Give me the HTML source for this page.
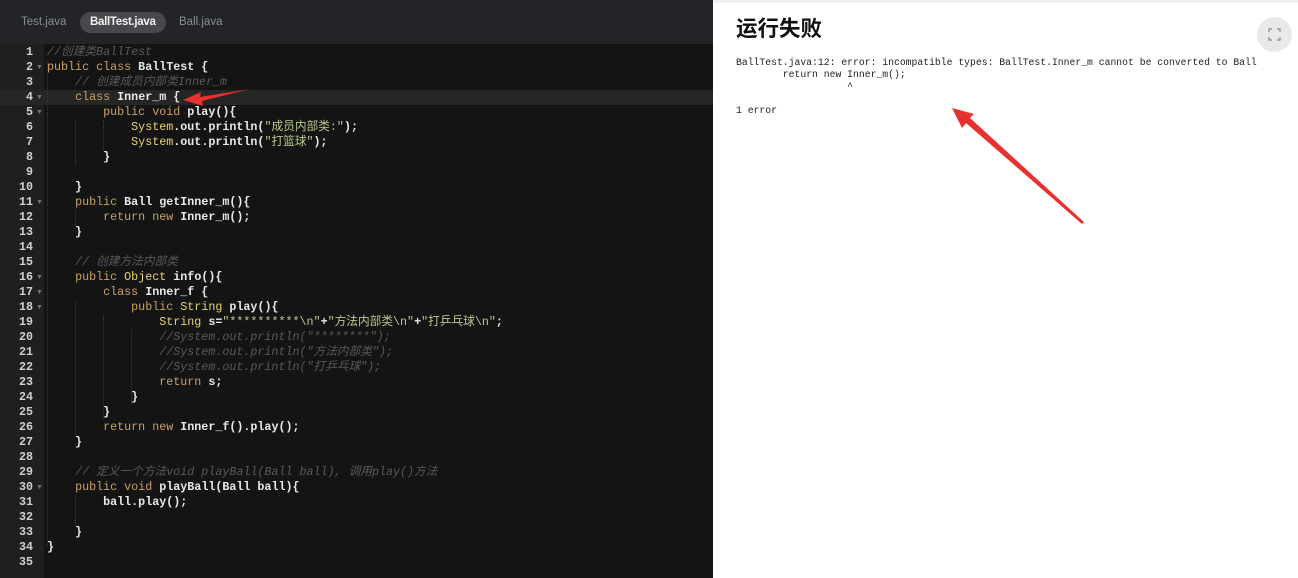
<!DOCTYPE html>
<html><head><meta charset="utf-8"><style>
*{margin:0;padding:0;box-sizing:border-box}
body{width:1298px;height:578px;overflow:hidden;background:#fff;position:relative;font-family:"Liberation Sans","Noto Sans CJK SC",sans-serif}
#ed{position:absolute;left:0;top:0;width:713px;height:578px;background:#141414}
#tabs{position:absolute;left:0;top:0;width:713px;height:44px;background:#222427}
.tab{position:absolute;top:12px;height:21px;line-height:21px;font-size:11.5px;color:#8a8d91;padding:0 10px}
.tab.on{background:#46484c;color:#f2f2f2;border-radius:11px;font-weight:bold;letter-spacing:-0.3px}
#gut{position:absolute;left:0;top:44px;width:44px;height:534px;background:#1f1f1f}
.ln{position:absolute;left:0;width:33px;text-align:right;font:bold 11.7px "Liberation Mono",monospace;color:#d0d0d0;height:15px;line-height:15px}
.fd{position:absolute;left:36px;font-size:7px;color:#777;line-height:15px}
.cl{position:absolute;left:47px;white-space:pre;font:11.7px "Liberation Mono","Noto Sans CJK SC",monospace;color:#e8e8e8;height:15px;line-height:15px;font-weight:bold}
.k{color:#c9a064;font-weight:normal}
.c{color:#5a5a5a;font-style:italic;font-weight:normal}
.s{color:#b9c98d;font-weight:normal}
.y{color:#e6d36a;font-weight:normal}
.g{position:absolute;width:0;border-left:1px dotted #3a3a3a}
#rp{position:absolute;left:713px;top:0;width:585px;height:578px;background:#fff;border-top:3px solid #f0f0f0}
h1{position:absolute;left:23px;top:9px;font-size:21.5px;font-weight:bold;color:#111;font-family:"Liberation Sans","Noto Sans CJK SC",sans-serif}
pre{position:absolute;left:23px;top:54px;font:9.75px/12px "Liberation Mono",monospace;color:#222}
#fs{position:absolute;left:544px;top:14px;width:35px;height:35px;border-radius:50%;background:#e9e9e9}
</style></head><body>
<div id="ed">
<div id="tabs">
<div class="tab" style="left:11px">Test.java</div>
<div class="tab on" style="left:80px">BallTest.java</div>
<div class="tab" style="left:169px">Ball.java</div>
</div>
<div id="gut"></div>
<div style="position:absolute;left:0;top:90px;width:713px;height:15px;background:#262626"></div>
<div id="lines"></div>
</div>
<div style="position:absolute;left:718px;top:445px">
<div style="width:5px;height:5px;border-radius:50%;background:#ccc;margin-bottom:3px"></div>
<div style="width:5px;height:5px;border-radius:50%;background:#ccc;margin-bottom:3px"></div>
<div style="width:5px;height:5px;border-radius:50%;background:#ccc;margin-bottom:3px"></div>
<div style="width:5px;height:5px;border-radius:50%;background:#ccc"></div>
</div>
<div id="rp">
<h1>运行失败</h1>
<div id="fs"><svg width="35" height="35" viewBox="0 0 35 35" fill="none" stroke="#888" stroke-width="1.2"><path d="M12 15v-3h3M20 12h3v3M23 20v3h-3M15 23h-3v-3"/></svg></div>
<pre>BallTest.java:12: error: incompatible types: BallTest.Inner_m cannot be converted to Ball
        return new Inner_m();
                   ^

1 error</pre>
</div>
<svg style="position:absolute;left:0;top:0" width="1298" height="578">
<polygon points="250,89 200,97 201,92 183,100 203,106 202,101" fill="#e8312f"/>
<polygon points="1084,222 970,118 974,114 952,108 962,128 966,123 1082,224" fill="#e8312f"/>
</svg>
<script>
const L=[
'<span class="c">//创建类BallTest</span>',
'<span class="k">public class</span> BallTest {',
'    <span class="c">// 创建成员内部类Inner_m</span>',
'    <span class="k">class</span> Inner_m {',
'        <span class="k">public void</span> play(){',
'            <span class="y">System</span>.out.println(<span class="s">"成员内部类:"</span>);',
'            <span class="y">System</span>.out.println(<span class="s">"打篮球"</span>);',
'        }',
'',
'    }',
'    <span class="k">public</span> Ball getInner_m(){',
'        <span class="k">return new</span> Inner_m();',
'    }',
'',
'    <span class="c">// 创建方法内部类</span>',
'    <span class="k">public</span> <span class="y">Object</span> info(){',
'        <span class="k">class</span> Inner_f {',
'            <span class="k">public</span> <span class="y">String</span> play(){',
'                <span class="y">String</span> s=<span class="s">"**********\\n"</span>+<span class="s">"方法内部类\\n"</span>+<span class="s">"打乒乓球\\n"</span>;',
'                <span class="c">//System.out.println("********");</span>',
'                <span class="c">//System.out.println("方法内部类");</span>',
'                <span class="c">//System.out.println("打乒乓球");</span>',
'                <span class="k">return</span> s;',
'            }',
'        }',
'        <span class="k">return new</span> Inner_f().play();',
'    }',
'',
'    <span class="c">// 定义一个方法void playBall(Ball ball), 调用play()方法</span>',
'    <span class="k">public void</span> playBall(Ball ball){',
'        ball.play();',
'',
'    }',
'}',
''];
const F=[2,4,5,11,16,17,18,30];
let h='';
L.forEach((t,i)=>{const y=45+i*15;h+=`<div class="ln" style="top:${y}px">${i+1}</div>`;if(F.includes(i+1))h+=`<div class="fd" style="top:${y}px">▼</div>`;h+=`<div class="cl" style="top:${y}px">${t}</div>`;});
const G=[[47,60,545],[75,120,165],[103,120,150],[75,210,225],[75,300,435],[103,315,420],[131,330,405],[75,495,525]];
G.forEach(g=>h+=`<div class="g" style="left:${g[0]}px;top:${g[1]}px;height:${g[2]-g[1]}px"></div>`);
document.getElementById('lines').innerHTML=h;
</script>
</body></html>
